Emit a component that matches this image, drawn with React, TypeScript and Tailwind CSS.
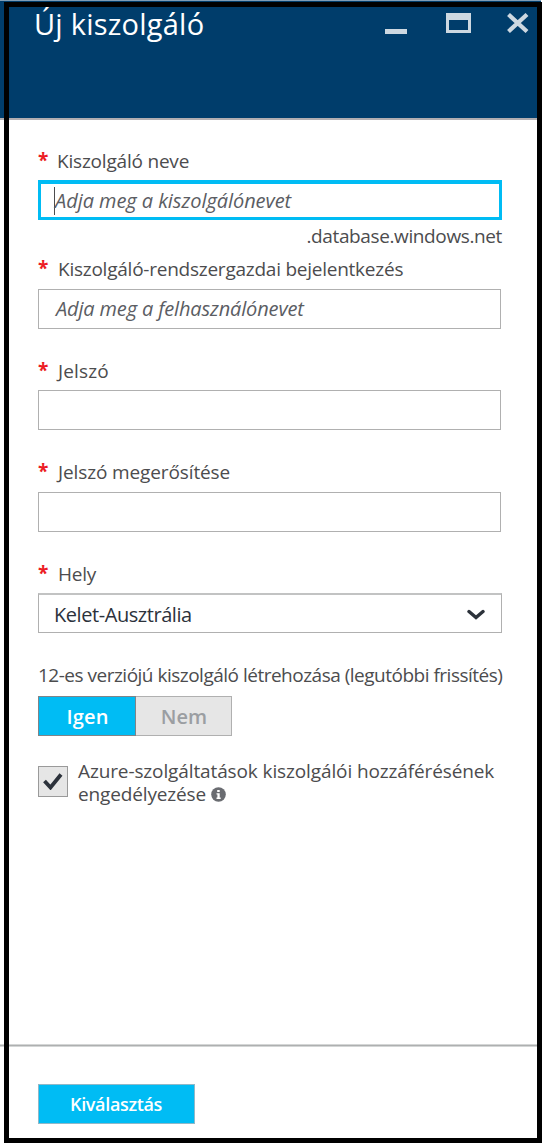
import React from "react";

function Label({ children, className = "", textClass = "" }: { children: React.ReactNode; className?: string; textClass?: string }) {
  return (
    <div className={`flex h-6 items-start text-[19px] leading-6 text-[#4c4c4e] ${className}`}>
      <span className="w-[19px] shrink-0 font-bold leading-[22px] text-[#ec1c24]">*</span>
      <span className={`whitespace-nowrap ${textClass}`}>{children}</span>
    </div>
  );
}

export default function App() {
  return (
    <div className="relative flex h-[1144px] w-[543px] flex-col overflow-hidden bg-white font-['Open_Sans',sans-serif]">
      <header className="mr-[2px] flex h-[120px] shrink-0 items-start justify-between border-t border-b-2 border-t-[#7f9db5] border-b-[#b1aeb1] bg-[#003d6b] pl-[34px] text-white">
        <h1 className="mt-[3px] text-[29px] leading-[40px] tracking-[0.23px] whitespace-nowrap">Új kiszolgáló</h1>
        <div className="mt-3 mr-[12px] flex items-start text-[#cdd8e1]">
          <svg className="mr-[39px]" width="22" height="21"><rect y="16" width="22" height="5" fill="currentColor" /></svg>
          <svg className="mr-[36px]" width="25" height="20"><path fill="currentColor" fillRule="evenodd" d="M0 0h25v20H0zM3 7v10h19V7z" /></svg>
          <svg width="22" height="20"><path stroke="currentColor" strokeWidth="4.2" d="M1.500 1.500l18.500 17M20 1.500l-18.500 17" /></svg>
        </div>
      </header>
      <main className="flex w-[540px] flex-1 flex-col px-[38px]">
        <Label className="mt-[29px]" textClass="tracking-[-0.2px]">Kiszolgáló neve</Label>
        <div className="mt-[7px] flex h-10 w-[464px] items-center border-[3px] border-t-4 border-[#00bcf4] pl-[13px] text-[20px] tracking-[-0.06px] text-[#5b5d63] italic">
          <span className="h-7 w-px bg-[#4c4c4e]" />
          <span className="whitespace-nowrap">Adja meg a kiszolgálónevet</span>
        </div>
        <div className="mt-1 h-6 self-end text-[19px] leading-6 tracking-[-0.38px] whitespace-nowrap text-[#4c4c4e]">.database.windows.net</div>
        <Label className="mt-[9px]" textClass="pl-px tracking-[-0.24px]">Kiszolgáló-rendszergazdai bejelentkezés</Label>
        <div className="mt-[8px] flex h-10 w-[463px] items-center border border-[#b0b0b0] pl-[17px] text-[20px] tracking-[-0.15px] text-[#5b5d63] italic">
          <span className="whitespace-nowrap">Adja meg a felhasználónevet</span>
        </div>
        <Label className="mt-[30px]" textClass="pl-px tracking-[0.15px]">Jelszó</Label>
        <div className="mt-[7px] h-10 w-[463px] border border-[#b0b0b0]" />
        <Label className="mt-[30px]" textClass="pl-px tracking-[-0.12px]">Jelszó megerősítése</Label>
        <div className="mt-[8px] h-10 w-[463px] border border-[#b0b0b0]" />
        <Label className="mt-[30px]" textClass="pl-px tracking-[-0.2px]">Hely</Label>
        <div className="mt-[7px] flex h-10 w-[464px] items-center justify-between border border-t-2 border-[#b0b0b0] border-t-[#c2c3c3] pr-4 pl-[15px] text-[20px] tracking-[-0.44px] text-[#2c323b]">
          <span className="pt-[2px] whitespace-nowrap">Kelet-Ausztrália</span>
          <svg className="mt-[2px]" width="18" height="11" viewBox="0 0 18 11"><path d="M2 2.500l7 6 7-6" fill="none" stroke="currentColor" strokeWidth="3.400" strokeLinecap="round" /></svg>
        </div>
        <div className="mt-[30px] h-6 text-[19px] leading-6 tracking-[-0.5px] whitespace-nowrap text-[#4c4c4e]">12-es verziójú kiszolgáló létrehozása (legutóbbi frissítés)</div>
        <div className="mt-[9px] flex h-10 text-[20px] font-semibold">
          <div className="flex w-[98px] items-center justify-center border border-[#808488] bg-[#00bcf4] pt-[2px] pl-px tracking-[0.2px] text-white">Igen</div>
          <div className="flex w-[96px] items-center justify-center border border-l-0 border-[#b0b0b0] bg-[#e6e6e6] pt-[2px] pl-px text-[#9b9ea2]">Nem</div>
        </div>
        <div className="mt-[24px] flex items-start">
          <div className="mt-[6px] flex h-[31px] w-[30px] items-center justify-center border border-[#9a9a9a] bg-[#e6e6e6]">
            <svg width="20" height="17" viewBox="0 0 20 17"><path d="M1.500 8l6 6.500L18 1.500" fill="none" stroke="#2c323b" strokeWidth="3.800" /></svg>
          </div>
          <div className="ml-[10px] text-[19px] leading-[23px] text-[#4c4c4e]">
            <div className="tracking-[-0.12px] whitespace-nowrap">Azure-szolgáltatások kiszolgálói hozzáférésének</div>
            <div className="flex items-center">
              <span className="tracking-[-0.14px] whitespace-nowrap">engedélyezése</span>
              <svg className="ml-[5px]" width="15" height="15" viewBox="0 0 15 15"><circle cx="7.500" cy="7.500" r="7.300" fill="#6a6c71" /><path d="M6.200 3h2.500v2H6.200zM5.500 6.200h3.200v4.300h1V12H5.500v-1.500h.9V7.600h-.9z" fill="#fff" /></svg>
            </div>
          </div>
        </div>
      </main>
      <footer className="mr-[5px] h-[100px] shrink-0">
        <div className="h-[3px] border-y border-[#d4d6d6] bg-[#aeb0b0]" />
        <div className="mt-[37px] ml-[38px] flex h-10 w-[157px] items-center justify-center border border-[#8fb8c8] bg-[#00bcf4] pr-px text-[18px] font-semibold tracking-[-0.34px] text-white">Kiválasztás</div>
      </footer>
      <div className="pointer-events-none absolute top-[2px] right-px bottom-px left-[4px] border-[5px] border-black" />
    </div>
  );
}
